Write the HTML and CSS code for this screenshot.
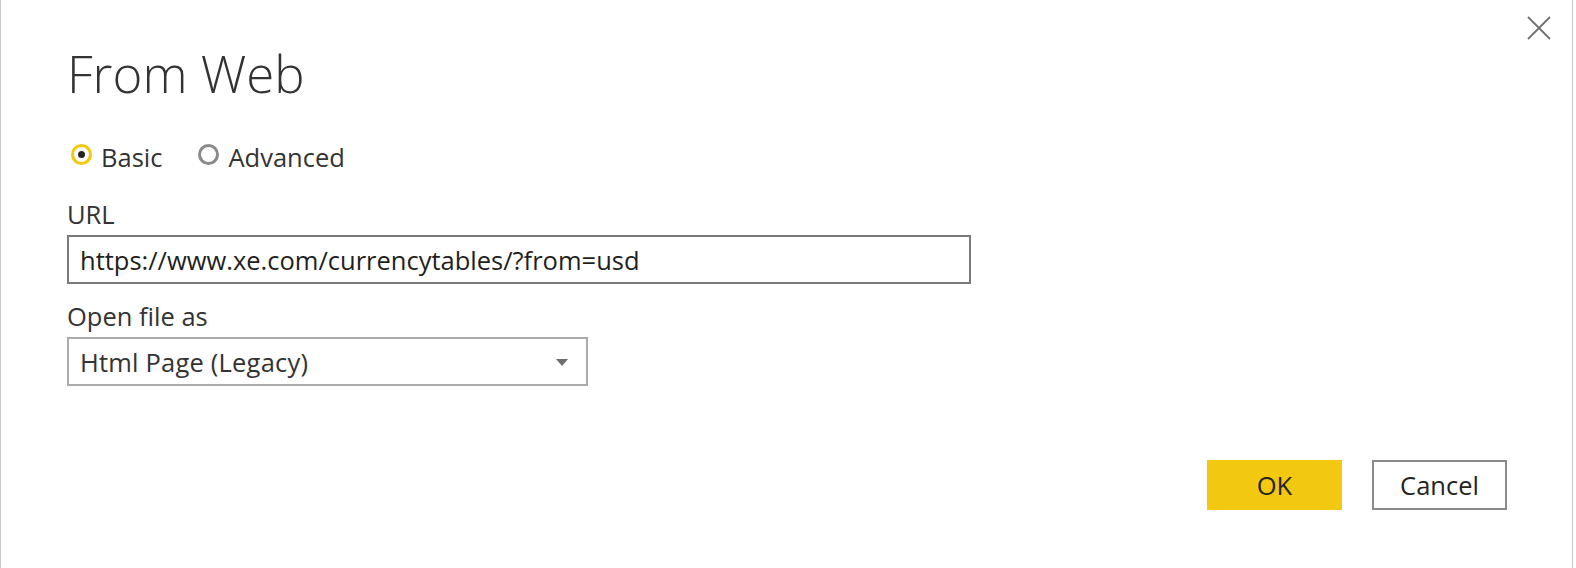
FILE: index.html
```html
<!DOCTYPE html>
<html lang="en">
<head>
<meta charset="utf-8">
<title>From Web</title>
<link rel="stylesheet" href="styles.css">
</head>
<body>
<div class="dialog">
  <button class="close" aria-label="Close">
    <svg width="24" height="24" viewBox="0 0 24 24"><path d="M1 1 L23 23 M23 1 L1 23" stroke="#707070" stroke-width="1.8" fill="none"/></svg>
  </button>
  <h1 class="title">From Web</h1>
  <div class="radios">
    <label class="radio"><span class="circle checked"></span><span>Basic</span></label>
    <label class="radio"><span class="circle"></span><span>Advanced</span></label>
  </div>
  <div class="label url-label">URL</div>
  <div class="field input">https://www.xe.com/currencytables/?from=usd</div>
  <div class="label open-label">Open file as</div>
  <div class="field select"><span>Html Page (Legacy)</span><span class="arrow"></span></div>
  <div class="actions">
    <button class="btn ok">OK</button>
    <button class="btn cancel">Cancel</button>
  </div>
</div>
</body>
</html>
```
FILE: styles.css
```css
html, body {
  margin: 0;
  padding: 0;
  background: #ffffff;
}
.dialog {
  box-sizing: border-box;
  width: 1573px;
  height: 568px;
  border-left: 1px solid #c8c8c8;
  border-right: 1px solid #c8c8c8;
  padding: 43px 0 0 66px;
  position: relative;
  display: flex;
  flex-direction: column;
  align-items: flex-start;
  font-family: "Open Sans", "Noto Sans", sans-serif;
  font-size: 25.5px;
  line-height: 30px;
  color: #333333;
}
.close {
  position: absolute;
  top: 16px;
  right: 21px;
  width: 24px;
  height: 24px;
  padding: 0;
  border: 0;
  background: transparent;
}
.close svg { display: block; }
.title {
  margin: 0;
  font-size: 51px;
  line-height: 60px;
  font-weight: 300;
  color: #333333;
}
.radios {
  display: flex;
  margin-top: 39px;
  margin-left: 4px;
}
.radio {
  display: flex;
  align-items: flex-start;
  gap: 9px;
}
.radio + .radio {
  margin-left: 36px;
}
.circle {
  box-sizing: border-box;
  width: 21px;
  height: 21px;
  margin-top: 2px;
  border-radius: 50%;
  border: 3px solid #8a8a8a;
  display: flex;
  align-items: center;
  justify-content: center;
}
.circle.checked {
  border-color: #f2c811;
}
.circle.checked::after {
  content: "";
  width: 7px;
  height: 7px;
  border-radius: 50%;
  background: #252423;
}
.url-label { margin-top: 27px; }
.open-label { margin-top: 17px; }
.field {
  box-sizing: border-box;
  height: 49px;
  margin-top: 6px;
  padding: 8px 11px 7px;
  color: #1f1f1f;
}
.input {
  width: 904px;
  border: 2px solid #7a7a7a;
}
.select {
  width: 521px;
  border: 2px solid #ababab;
  padding-right: 18px;
  display: flex;
  align-items: center;
  justify-content: space-between;
  color: #333333;
  letter-spacing: 0.2px;
}
.arrow {
  width: 0;
  height: 0;
  border-left: 6px solid transparent;
  border-right: 6px solid transparent;
  border-top: 7px solid #6e6e6e;
}
.actions {
  align-self: stretch;
  display: flex;
  justify-content: flex-end;
  gap: 30px;
  margin-top: 74px;
  padding-right: 65px;
}
.btn {
  box-sizing: border-box;
  width: 135px;
  height: 50px;
  font-family: "Open Sans", "Noto Sans", sans-serif;
  font-size: 25.5px;
  line-height: 30px;
  color: #252423;
  padding: 0;
}
.ok {
  background: #f2c811;
  border: 0;
}
.cancel {
  background: #ffffff;
  border: 2px solid #8a8a8a;
}
```
